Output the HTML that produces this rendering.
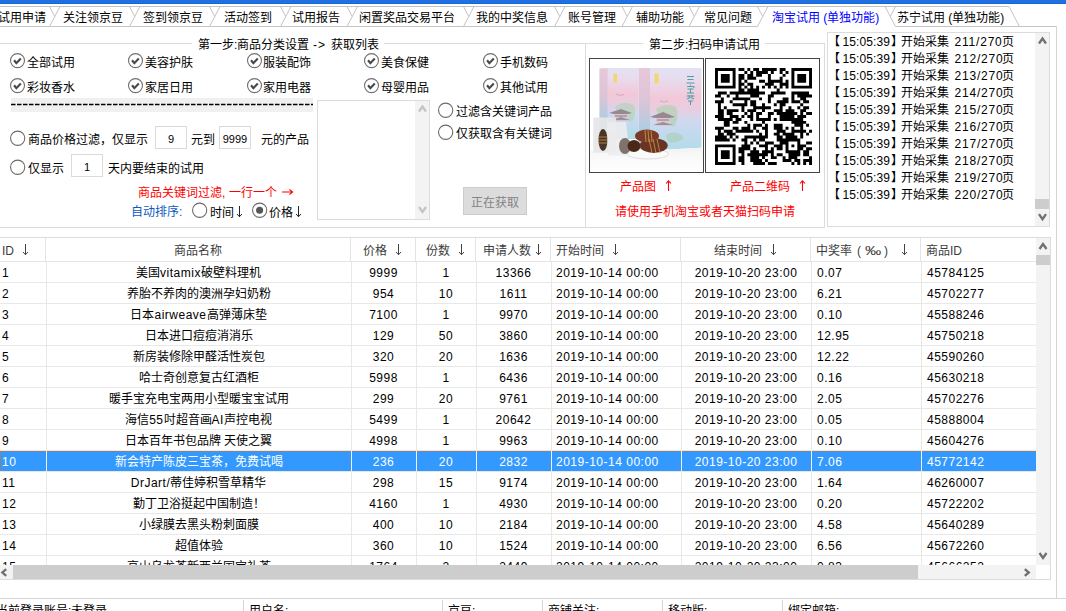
<!DOCTYPE html>
<html lang="zh-CN"><head><meta charset="utf-8"><title>ui</title><style>
html,body{margin:0;padding:0;width:1066px;height:611px;overflow:hidden;background:#fff;font-family:"Liberation Sans",sans-serif;font-size:12px;color:#000}
.a{position:absolute;white-space:nowrap;line-height:20px;height:20px}
.l{letter-spacing:0.5px}
.hl{position:absolute;height:1px;background:#dcdcdc}
.vl{position:absolute;width:1px;background:#dcdcdc}
svg{position:absolute;left:0;top:0;overflow:visible}
svg.i{position:static;display:inline-block;vertical-align:top}
</style></head><body>

<svg width="1066" height="32" style="position:absolute;left:0;top:0"><rect x="0" y="0" width="1066" height="3" fill="#2170e0"/><rect x="0" y="3" width="1066" height="1" fill="#1565dc"/><rect x="0" y="6" width="1009" height="1" fill="#c4c4c4"/><rect x="0" y="26" width="757.5" height="1" fill="#c4c4c4"/><rect x="895.5" y="26" width="161" height="1" fill="#c4c4c4"/><line x1="49.5" y1="6.5" x2="54.75" y2="16.5" stroke="#c4c4c4" stroke-width="1"/><line x1="60.0" y1="6.5" x2="49.5" y2="26.5" stroke="#c4c4c4" stroke-width="1"/><line x1="129.5" y1="6.5" x2="134.75" y2="16.5" stroke="#c4c4c4" stroke-width="1"/><line x1="140.0" y1="6.5" x2="129.5" y2="26.5" stroke="#c4c4c4" stroke-width="1"/><line x1="209.5" y1="6.5" x2="214.75" y2="16.5" stroke="#c4c4c4" stroke-width="1"/><line x1="220.0" y1="6.5" x2="209.5" y2="26.5" stroke="#c4c4c4" stroke-width="1"/><line x1="280.5" y1="6.5" x2="285.75" y2="16.5" stroke="#c4c4c4" stroke-width="1"/><line x1="291.0" y1="6.5" x2="280.5" y2="26.5" stroke="#c4c4c4" stroke-width="1"/><line x1="347" y1="6.5" x2="352.25" y2="16.5" stroke="#c4c4c4" stroke-width="1"/><line x1="357.5" y1="6.5" x2="347" y2="26.5" stroke="#c4c4c4" stroke-width="1"/><line x1="463.5" y1="6.5" x2="468.75" y2="16.5" stroke="#c4c4c4" stroke-width="1"/><line x1="474.0" y1="6.5" x2="463.5" y2="26.5" stroke="#c4c4c4" stroke-width="1"/><line x1="554.5" y1="6.5" x2="559.75" y2="16.5" stroke="#c4c4c4" stroke-width="1"/><line x1="565.0" y1="6.5" x2="554.5" y2="26.5" stroke="#c4c4c4" stroke-width="1"/><line x1="622" y1="6.5" x2="627.25" y2="16.5" stroke="#c4c4c4" stroke-width="1"/><line x1="632.5" y1="6.5" x2="622" y2="26.5" stroke="#c4c4c4" stroke-width="1"/><line x1="689" y1="6.5" x2="694.25" y2="16.5" stroke="#c4c4c4" stroke-width="1"/><line x1="699.5" y1="6.5" x2="689" y2="26.5" stroke="#c4c4c4" stroke-width="1"/><line x1="757.5" y1="6.5" x2="762.75" y2="16.5" stroke="#c4c4c4" stroke-width="1"/><line x1="768.0" y1="6.5" x2="757.5" y2="26.5" stroke="#c4c4c4" stroke-width="1"/><line x1="885" y1="6.5" x2="895.5" y2="26.5" stroke="#c4c4c4" stroke-width="1"/><line x1="895.5" y1="6.5" x2="890.25" y2="16.5" stroke="#c4c4c4" stroke-width="1"/><line x1="1009" y1="6.5" x2="1019.5" y2="26.5" stroke="#c4c4c4" stroke-width="1"/><rect x="1056" y="26" width="1" height="572" fill="#d4d4d4"/></svg>
<div class="a" style="left:-2px;top:8px;color:#000">试用申请</div>
<div class="a" style="left:63px;top:8px;color:#000">关注领京豆</div>
<div class="a" style="left:143px;top:8px;color:#000">签到领京豆</div>
<div class="a" style="left:224px;top:8px;color:#000">活动签到</div>
<div class="a" style="left:292px;top:8px;color:#000">试用报告</div>
<div class="a" style="left:359px;top:8px;color:#000">闲置奖品交易平台</div>
<div class="a" style="left:476px;top:8px;color:#000">我的中奖信息</div>
<div class="a" style="left:568px;top:8px;color:#000">账号管理</div>
<div class="a" style="left:636px;top:8px;color:#000">辅助功能</div>
<div class="a" style="left:704px;top:8px;color:#000">常见问题</div>
<div class="a" style="left:772px;top:8px;color:#0000ff">淘宝试用 (单独功能)</div>
<div class="a" style="left:897px;top:8px;color:#000">苏宁试用 (单独功能)</div>
<div class="hl" style="left:0;top:43px;width:192px"></div>
<div class="hl" style="left:384px;top:43px;width:259px"></div>
<div class="hl" style="left:765px;top:43px;width:60px"></div>
<div class="vl" style="left:585px;top:43px;height:185px"></div>
<div class="vl" style="left:824px;top:43px;height:185px"></div>
<div class="hl" style="left:0;top:227px;width:825px"></div>
<div class="a" style="left:198px;top:35px">第一步:商品分类设置</div>
<div class="a" style="left:313px;top:35px;letter-spacing:1px">-&gt;</div>
<div class="a" style="left:331px;top:35px">获取列表</div>
<div class="a" style="left:649px;top:35px">第二步:扫码申请试用</div>
<svg style="left:9.3px;top:52.5px" width="16" height="16"><circle cx="8.5" cy="7.6" r="7.0" fill="#fff" stroke="#707070" stroke-width="1.1"/><path d="M5.05 7.25 L7.35 10.2 L11.8 5.45" fill="none" stroke="#484848" stroke-width="2.1"/></svg>
<div class="a" style="left:26.8px;top:53px">全部试用</div>
<svg style="left:127.19999999999999px;top:52.5px" width="16" height="16"><circle cx="8.5" cy="7.6" r="7.0" fill="#fff" stroke="#707070" stroke-width="1.1"/><path d="M5.05 7.25 L7.35 10.2 L11.8 5.45" fill="none" stroke="#484848" stroke-width="2.1"/></svg>
<div class="a" style="left:144.7px;top:53px">美容护肤</div>
<svg style="left:245.5px;top:52.5px" width="16" height="16"><circle cx="8.5" cy="7.6" r="7.0" fill="#fff" stroke="#707070" stroke-width="1.1"/><path d="M5.05 7.25 L7.35 10.2 L11.8 5.45" fill="none" stroke="#484848" stroke-width="2.1"/></svg>
<div class="a" style="left:263.0px;top:53px">服装配饰</div>
<svg style="left:363px;top:52.5px" width="16" height="16"><circle cx="8.5" cy="7.6" r="7.0" fill="#fff" stroke="#707070" stroke-width="1.1"/><path d="M5.05 7.25 L7.35 10.2 L11.8 5.45" fill="none" stroke="#484848" stroke-width="2.1"/></svg>
<div class="a" style="left:380.5px;top:53px">美食保健</div>
<svg style="left:482px;top:52.5px" width="16" height="16"><circle cx="8.5" cy="7.6" r="7.0" fill="#fff" stroke="#707070" stroke-width="1.1"/><path d="M5.05 7.25 L7.35 10.2 L11.8 5.45" fill="none" stroke="#484848" stroke-width="2.1"/></svg>
<div class="a" style="left:499.5px;top:53px">手机数码</div>
<svg style="left:9.3px;top:77.5px" width="16" height="16"><circle cx="8.5" cy="7.6" r="7.0" fill="#fff" stroke="#707070" stroke-width="1.1"/><path d="M5.05 7.25 L7.35 10.2 L11.8 5.45" fill="none" stroke="#484848" stroke-width="2.1"/></svg>
<div class="a" style="left:26.8px;top:78px">彩妆香水</div>
<svg style="left:127.19999999999999px;top:77.5px" width="16" height="16"><circle cx="8.5" cy="7.6" r="7.0" fill="#fff" stroke="#707070" stroke-width="1.1"/><path d="M5.05 7.25 L7.35 10.2 L11.8 5.45" fill="none" stroke="#484848" stroke-width="2.1"/></svg>
<div class="a" style="left:144.7px;top:78px">家居日用</div>
<svg style="left:245.5px;top:77.5px" width="16" height="16"><circle cx="8.5" cy="7.6" r="7.0" fill="#fff" stroke="#707070" stroke-width="1.1"/><path d="M5.05 7.25 L7.35 10.2 L11.8 5.45" fill="none" stroke="#484848" stroke-width="2.1"/></svg>
<div class="a" style="left:263.0px;top:78px">家用电器</div>
<svg style="left:363px;top:77.5px" width="16" height="16"><circle cx="8.5" cy="7.6" r="7.0" fill="#fff" stroke="#707070" stroke-width="1.1"/><path d="M5.05 7.25 L7.35 10.2 L11.8 5.45" fill="none" stroke="#484848" stroke-width="2.1"/></svg>
<div class="a" style="left:380.5px;top:78px">母婴用品</div>
<svg style="left:482px;top:77.5px" width="16" height="16"><circle cx="8.5" cy="7.6" r="7.0" fill="#fff" stroke="#707070" stroke-width="1.1"/><path d="M5.05 7.25 L7.35 10.2 L11.8 5.45" fill="none" stroke="#484848" stroke-width="2.1"/></svg>
<div class="a" style="left:499.5px;top:78px">其他试用</div>
<div style="position:absolute;left:11px;top:98px;width:302px;height:14px;background:#f0f0f0"></div>
<svg style="left:11px;top:103px" width="302" height="3"><line x1="0" y1="1.5" x2="302" y2="1.5" stroke="#000" stroke-width="1.4" stroke-dasharray="4.5 1.5"/></svg>
<svg style="left:10.399999999999999px;top:129.5px" width="16" height="16"><circle cx="7.65" cy="8.25" r="7.1" fill="#fff" stroke="#6a6a6a" stroke-width="1.1"/></svg>
<div class="a" style="left:28px;top:130px">商品价格过滤，仅显示</div>
<div style="position:absolute;left:155px;top:126px;width:30px;height:21px;border:1px solid #dadada;background:#fff"></div>
<div class="a" style="left:155px;top:128.5px;width:32px;text-align:center;font-size:11px">9</div>
<div class="a" style="left:191px;top:130px">元到</div>
<div style="position:absolute;left:219px;top:126px;width:30px;height:21px;border:1px solid #dadada;background:#fff"></div>
<div class="a" style="left:219px;top:128.5px;width:32px;text-align:center;font-size:11px">9999</div>
<div class="a" style="left:261px;top:130px">元的产品</div>
<svg style="left:10.399999999999999px;top:158.5px" width="16" height="16"><circle cx="7.65" cy="8.25" r="7.1" fill="#fff" stroke="#6a6a6a" stroke-width="1.1"/></svg>
<div class="a" style="left:28px;top:159px">仅显示</div>
<div style="position:absolute;left:71px;top:154px;width:30px;height:21px;border:1px solid #dadada;background:#fff"></div>
<div class="a" style="left:71px;top:156.5px;width:32px;text-align:center;font-size:11px">1</div>
<div class="a" style="left:108px;top:159px">天内要结束的试用</div>
<div class="a" style="left:138px;top:183px;color:#ff0000">商品关键词过滤, 一行一个<span style="display:inline-block;width:5px"></span><svg class="i" width="11" height="6" style="margin-top:6px"><path d="M0 3H10.5M7.5 0.5L10.5 3L7.5 5.5" stroke="#f00" fill="none" stroke-width="1.1"/></svg></div>
<div class="a" style="left:131px;top:202px;color:#0a5ac0">自动排序:</div>
<svg style="left:192.3px;top:202.3px" width="16" height="16"><circle cx="7.65" cy="8.25" r="7.1" fill="#fff" stroke="#6a6a6a" stroke-width="1.1"/></svg>
<div class="a" style="left:210px;top:203px">时间<span style="display:inline-block;width:3px"></span><svg class="i" width="6" height="12" style="margin-top:3px"><path d="M2.5 0V11M0 8L2.5 10.7L5 8" stroke="#222" fill="none" stroke-width="1"/></svg></div>
<svg style="left:251.60000000000002px;top:202.3px" width="16" height="16"><circle cx="7.65" cy="8.25" r="7.1" fill="#fff" stroke="#6a6a6a" stroke-width="1.1"/><circle cx="7.6" cy="8.3" r="3.5" fill="#555"/></svg>
<div class="a" style="left:269px;top:203px">价格<span style="display:inline-block;width:3px"></span><svg class="i" width="6" height="12" style="margin-top:3px"><path d="M2.5 0V11M0 8L2.5 10.7L5 8" stroke="#222" fill="none" stroke-width="1"/></svg></div>
<div style="position:absolute;left:317px;top:100px;width:111px;height:118px;border:1px solid #dcdcdc;background:#fff"></div>
<div style="position:absolute;left:415px;top:101px;width:14px;height:118px;background:#f3f3f3"></div>
<svg width="1066" height="611"><path d="M419.0 111.5 L422.5 106.5 L426.0 111.5" fill="none" stroke="#c4c4c4" stroke-width="2.3"/><path d="M419.0 207.0 L422.5 212.0 L426.0 207.0" fill="none" stroke="#c4c4c4" stroke-width="2.3"/></svg>
<svg style="left:438px;top:102px" width="16" height="16"><circle cx="7.65" cy="8.25" r="7.1" fill="#fff" stroke="#6a6a6a" stroke-width="1.1"/></svg>
<div class="a" style="left:456px;top:102px">过滤含关键词产品</div>
<svg style="left:438px;top:123.6px" width="16" height="16"><circle cx="7.65" cy="8.25" r="7.1" fill="#fff" stroke="#6a6a6a" stroke-width="1.1"/></svg>
<div class="a" style="left:456px;top:124px">仅获取含有关键词</div>
<div style="position:absolute;left:463px;top:187px;width:62px;height:26px;border:1px solid #cccccc;background:#dcdcdc"></div>
<div class="a" style="left:471px;top:192.5px;color:#838383">正在获取</div>
<div style="position:absolute;left:589px;top:58px;width:113px;height:113px;border:1px solid #444;background:#fff"></div>
<div style="position:absolute;left:705px;top:58px;width:113px;height:113px;border:1px solid #444;background:#fff"></div>
<svg style="left:590px;top:59px" width="113" height="113">
<defs>
<linearGradient id="g1" x1="0" y1="0" x2="0" y2="1"><stop offset="0" stop-color="#e2e2f4"/><stop offset="0.14" stop-color="#e8dcee"/><stop offset="0.36" stop-color="#f2c8d8"/><stop offset="0.5" stop-color="#e8cde0"/><stop offset="0.64" stop-color="#d0d8f0"/><stop offset="1" stop-color="#b0dcea"/></linearGradient>
<linearGradient id="g2" x1="0" y1="0" x2="0" y2="1"><stop offset="0" stop-color="#e6c8d8"/><stop offset="0.4" stop-color="#dcc4d8"/><stop offset="0.7" stop-color="#b4cce0"/><stop offset="1" stop-color="#94ccd8"/></linearGradient>
<linearGradient id="gw" x1="0" y1="0" x2="0" y2="1"><stop offset="0" stop-color="#f6f6f6"/><stop offset="1" stop-color="#ffffff"/></linearGradient>
</defs>
<rect x="0" y="0" width="113" height="113" fill="#fff"/>
<polygon points="9.4,9.4 17.9,9 17.9,80 9.4,80" fill="url(#g2)"/>
<polygon points="17.9,9 48.6,9 48.6,80 17.9,80" fill="url(#g1)"/>
<polygon points="48.6,9 60,9 60,91.6 48.6,92" fill="url(#g2)"/>
<polygon points="60,9 111.5,9 111.5,88.8 60,91.6" fill="url(#g1)"/>
<rect x="0" y="91" width="113" height="22" fill="url(#gw)"/>
<polygon points="48.6,92 111.5,88.8 111.5,92 48.6,95" fill="#f4f4f4"/>
<rect x="23.5" y="14.5" width="3.5" height="9" fill="#f2d868"/>
<rect x="64.5" y="14.5" width="4" height="10" fill="#f2d868"/>
<g stroke="#4aa0a8" stroke-width="1" fill="none">
<path d="M97 17.5h7M97.5 20.5h6M96.5 24h8"/>
<path d="M100.5 25.5v1M97 27.5h7v1.5M97.5 30h6M100.5 30v4M97 34h7"/>
<path d="M96.5 37h8M99 36v2.5M102 36v2.5M97 40l3.5-1.5 3.5 1.5M98 42h5M100.5 42v4"/>
</g>
<g opacity="0.6">
<path d="M25 48 Q33 41 44 46 Q47 55 42 63 L30 60 Z" fill="#b0d4b0"/>
<path d="M19 54 L31 50 L42 54 L38 55 L24 55 Z" fill="#6a5858"/>
<rect x="24" y="55" width="14" height="7" fill="#d8c0c0"/>
<rect x="25" y="56" width="12" height="2" fill="#c07070"/>
<path d="M22 61 L31 58 L40 61 Z" fill="#7a6060"/>
<path d="M66 50 Q76 43 86 48 Q90 58 84 68 L72 64 Z" fill="#acd2ac"/>
<path d="M60 58 L73 53 L85 58 L80 59 L65 59 Z" fill="#6a5858"/>
<rect x="66" y="59" width="14" height="8" fill="#d8c4c8"/>
<rect x="67" y="60" width="12" height="2" fill="#c07070"/>
<path d="M63 66 L73 63 L83 66 Z" fill="#7a6060"/>
<path d="M76 76 Q86 70 94 79 Q86 85 78 83 Z" fill="#a8d0b0"/>
<path d="M26 35 l4 1.5 l4 -1 M70 42 l4 1 l4 -1" stroke="#908090" stroke-width="0.6" fill="none"/>
</g>
<polygon points="3.3,58.5 26,58.5 26,93.6 3.3,93.6" fill="#e6e6e8" opacity="0.92"/>
<ellipse cx="13" cy="81" rx="4.5" ry="11" fill="#4a3428"/>
<path d="M8.5 78 H17.5 M8.5 81 H17.5 M8.5 84 H17.5" stroke="#c09848" stroke-width="0.8"/>
<polygon points="16.8,62.9 36,62.9 40,96.3 18,96.3" fill="#ecebee" opacity="0.9"/>
<ellipse cx="35" cy="87" rx="6" ry="8" fill="#5a4a40" opacity="0.75"/>
<ellipse cx="58" cy="95" rx="20.5" ry="5" fill="#fafafa" stroke="#d8d8d8" stroke-width="0.8"/>
<ellipse cx="44" cy="87" rx="6.5" ry="6" fill="#4a2818"/>
<ellipse cx="63.7" cy="86.6" rx="14" ry="7.4" fill="#6a3424"/>
<ellipse cx="57" cy="77" rx="12" ry="6.5" fill="#7a3a28"/>
<path d="M55 71 L56 83 M58 71 L59 83 M61 71 L62 83 M59 80 L62 94 M63 80 L66 94 M67 80 L70 94" stroke="#c8a048" stroke-width="0.8"/>
</svg>
<svg style="left:714.5px;top:68px" width="98" height="98"><path d="M0.00 0.00h20.58v2.94h-20.58zM23.52 0.00h5.88v2.94h-5.88zM32.33 0.00h2.94v2.94h-2.94zM38.21 0.00h5.88v2.94h-5.88zM47.03 0.00h14.70v2.94h-14.70zM64.67 0.00h5.88v2.94h-5.88zM76.42 0.00h20.58v2.94h-20.58zM0.00 2.94h2.94v2.94h-2.94zM17.64 2.94h2.94v2.94h-2.94zM29.39 2.94h2.94v2.94h-2.94zM35.27 2.94h2.94v2.94h-2.94zM41.15 2.94h11.76v2.94h-11.76zM55.85 2.94h2.94v2.94h-2.94zM64.67 2.94h2.94v2.94h-2.94zM70.55 2.94h2.94v2.94h-2.94zM76.42 2.94h2.94v2.94h-2.94zM94.06 2.94h2.94v2.94h-2.94zM0.00 5.88h2.94v2.94h-2.94zM5.88 5.88h8.82v2.94h-8.82zM17.64 5.88h2.94v2.94h-2.94zM23.52 5.88h5.88v2.94h-5.88zM32.33 5.88h5.88v2.94h-5.88zM41.15 5.88h5.88v2.94h-5.88zM52.91 5.88h2.94v2.94h-2.94zM67.61 5.88h2.94v2.94h-2.94zM76.42 5.88h2.94v2.94h-2.94zM82.30 5.88h8.82v2.94h-8.82zM94.06 5.88h2.94v2.94h-2.94zM0.00 8.82h2.94v2.94h-2.94zM5.88 8.82h8.82v2.94h-8.82zM17.64 8.82h2.94v2.94h-2.94zM23.52 8.82h5.88v2.94h-5.88zM32.33 8.82h8.82v2.94h-8.82zM52.91 8.82h2.94v2.94h-2.94zM64.67 8.82h2.94v2.94h-2.94zM76.42 8.82h2.94v2.94h-2.94zM82.30 8.82h8.82v2.94h-8.82zM94.06 8.82h2.94v2.94h-2.94zM0.00 11.76h2.94v2.94h-2.94zM5.88 11.76h8.82v2.94h-8.82zM17.64 11.76h2.94v2.94h-2.94zM23.52 11.76h2.94v2.94h-2.94zM29.39 11.76h2.94v2.94h-2.94zM44.09 11.76h5.88v2.94h-5.88zM52.91 11.76h14.70v2.94h-14.70zM70.55 11.76h2.94v2.94h-2.94zM76.42 11.76h2.94v2.94h-2.94zM82.30 11.76h8.82v2.94h-8.82zM94.06 11.76h2.94v2.94h-2.94zM0.00 14.70h2.94v2.94h-2.94zM17.64 14.70h2.94v2.94h-2.94zM23.52 14.70h5.88v2.94h-5.88zM32.33 14.70h5.88v2.94h-5.88zM49.97 14.70h8.82v2.94h-8.82zM64.67 14.70h8.82v2.94h-8.82zM76.42 14.70h2.94v2.94h-2.94zM94.06 14.70h2.94v2.94h-2.94zM0.00 17.64h20.58v2.94h-20.58zM23.52 17.64h2.94v2.94h-2.94zM29.39 17.64h2.94v2.94h-2.94zM35.27 17.64h2.94v2.94h-2.94zM41.15 17.64h2.94v2.94h-2.94zM47.03 17.64h2.94v2.94h-2.94zM52.91 17.64h2.94v2.94h-2.94zM58.79 17.64h2.94v2.94h-2.94zM64.67 17.64h2.94v2.94h-2.94zM70.55 17.64h2.94v2.94h-2.94zM76.42 17.64h20.58v2.94h-20.58zM23.52 20.58h5.88v2.94h-5.88zM32.33 20.58h11.76v2.94h-11.76zM61.73 20.58h2.94v2.94h-2.94zM2.94 23.52h8.82v2.94h-8.82zM14.70 23.52h35.27v2.94h-35.27zM55.85 23.52h14.70v2.94h-14.70zM76.42 23.52h17.64v2.94h-17.64zM0.00 26.45h5.88v2.94h-5.88zM11.76 26.45h2.94v2.94h-2.94zM20.58 26.45h2.94v2.94h-2.94zM35.27 26.45h8.82v2.94h-8.82zM52.91 26.45h5.88v2.94h-5.88zM76.42 26.45h2.94v2.94h-2.94zM82.30 26.45h14.70v2.94h-14.70zM5.88 29.39h2.94v2.94h-2.94zM17.64 29.39h17.64v2.94h-17.64zM44.09 29.39h2.94v2.94h-2.94zM52.91 29.39h2.94v2.94h-2.94zM67.61 29.39h5.88v2.94h-5.88zM76.42 29.39h2.94v2.94h-2.94zM85.24 29.39h5.88v2.94h-5.88zM0.00 32.33h8.82v2.94h-8.82zM14.70 32.33h2.94v2.94h-2.94zM29.39 32.33h2.94v2.94h-2.94zM35.27 32.33h5.88v2.94h-5.88zM52.91 32.33h2.94v2.94h-2.94zM61.73 32.33h11.76v2.94h-11.76zM76.42 32.33h8.82v2.94h-8.82zM88.18 32.33h5.88v2.94h-5.88zM2.94 35.27h2.94v2.94h-2.94zM17.64 35.27h14.70v2.94h-14.70zM35.27 35.27h5.88v2.94h-5.88zM47.03 35.27h2.94v2.94h-2.94zM58.79 35.27h2.94v2.94h-2.94zM64.67 35.27h5.88v2.94h-5.88zM85.24 35.27h2.94v2.94h-2.94zM2.94 38.21h2.94v2.94h-2.94zM8.82 38.21h2.94v2.94h-2.94zM26.45 38.21h2.94v2.94h-2.94zM38.21 38.21h17.64v2.94h-17.64zM64.67 38.21h2.94v2.94h-2.94zM73.48 38.21h2.94v2.94h-2.94zM82.30 38.21h2.94v2.94h-2.94zM88.18 38.21h5.88v2.94h-5.88zM2.94 41.15h5.88v2.94h-5.88zM11.76 41.15h11.76v2.94h-11.76zM26.45 41.15h2.94v2.94h-2.94zM32.33 41.15h8.82v2.94h-8.82zM47.03 41.15h2.94v2.94h-2.94zM58.79 41.15h8.82v2.94h-8.82zM70.55 41.15h8.82v2.94h-8.82zM85.24 41.15h5.88v2.94h-5.88zM2.94 44.09h5.88v2.94h-5.88zM11.76 44.09h5.88v2.94h-5.88zM29.39 44.09h2.94v2.94h-2.94zM35.27 44.09h2.94v2.94h-2.94zM41.15 44.09h5.88v2.94h-5.88zM52.91 44.09h5.88v2.94h-5.88zM61.73 44.09h20.58v2.94h-20.58zM85.24 44.09h2.94v2.94h-2.94zM91.12 44.09h5.88v2.94h-5.88zM0.00 47.03h8.82v2.94h-8.82zM14.70 47.03h8.82v2.94h-8.82zM26.45 47.03h2.94v2.94h-2.94zM32.33 47.03h5.88v2.94h-5.88zM41.15 47.03h2.94v2.94h-2.94zM52.91 47.03h2.94v2.94h-2.94zM64.67 47.03h14.70v2.94h-14.70zM82.30 47.03h8.82v2.94h-8.82zM2.94 49.97h14.70v2.94h-14.70zM20.58 49.97h5.88v2.94h-5.88zM35.27 49.97h2.94v2.94h-2.94zM41.15 49.97h14.70v2.94h-14.70zM58.79 49.97h2.94v2.94h-2.94zM64.67 49.97h23.52v2.94h-23.52zM8.82 52.91h5.88v2.94h-5.88zM17.64 52.91h5.88v2.94h-5.88zM29.39 52.91h2.94v2.94h-2.94zM47.03 52.91h2.94v2.94h-2.94zM76.42 52.91h14.70v2.94h-14.70zM8.82 55.85h5.88v2.94h-5.88zM32.33 55.85h2.94v2.94h-2.94zM38.21 55.85h8.82v2.94h-8.82zM49.97 55.85h2.94v2.94h-2.94zM58.79 55.85h8.82v2.94h-8.82zM79.36 55.85h8.82v2.94h-8.82zM91.12 55.85h2.94v2.94h-2.94zM0.00 58.79h8.82v2.94h-8.82zM17.64 58.79h5.88v2.94h-5.88zM26.45 58.79h8.82v2.94h-8.82zM38.21 58.79h2.94v2.94h-2.94zM47.03 58.79h5.88v2.94h-5.88zM58.79 58.79h8.82v2.94h-8.82zM70.55 58.79h2.94v2.94h-2.94zM76.42 58.79h2.94v2.94h-2.94zM85.24 58.79h2.94v2.94h-2.94zM2.94 61.73h2.94v2.94h-2.94zM8.82 61.73h8.82v2.94h-8.82zM20.58 61.73h17.64v2.94h-17.64zM41.15 61.73h2.94v2.94h-2.94zM49.97 61.73h2.94v2.94h-2.94zM61.73 61.73h8.82v2.94h-8.82zM76.42 61.73h14.70v2.94h-14.70zM94.06 61.73h2.94v2.94h-2.94zM2.94 64.67h5.88v2.94h-5.88zM11.76 64.67h8.82v2.94h-8.82zM44.09 64.67h2.94v2.94h-2.94zM49.97 64.67h2.94v2.94h-2.94zM58.79 64.67h5.88v2.94h-5.88zM67.61 64.67h11.76v2.94h-11.76zM85.24 64.67h2.94v2.94h-2.94zM91.12 64.67h2.94v2.94h-2.94zM0.00 67.61h11.76v2.94h-11.76zM14.70 67.61h2.94v2.94h-2.94zM20.58 67.61h2.94v2.94h-2.94zM29.39 67.61h23.52v2.94h-23.52zM61.73 67.61h5.88v2.94h-5.88zM70.55 67.61h11.76v2.94h-11.76zM85.24 67.61h2.94v2.94h-2.94zM0.00 70.55h14.70v2.94h-14.70zM17.64 70.55h2.94v2.94h-2.94zM26.45 70.55h5.88v2.94h-5.88zM38.21 70.55h2.94v2.94h-2.94zM44.09 70.55h5.88v2.94h-5.88zM61.73 70.55h23.52v2.94h-23.52zM29.39 73.48h2.94v2.94h-2.94zM35.27 73.48h2.94v2.94h-2.94zM41.15 73.48h2.94v2.94h-2.94zM49.97 73.48h8.82v2.94h-8.82zM64.67 73.48h8.82v2.94h-8.82zM82.30 73.48h2.94v2.94h-2.94zM91.12 73.48h5.88v2.94h-5.88zM0.00 76.42h20.58v2.94h-20.58zM26.45 76.42h8.82v2.94h-8.82zM44.09 76.42h8.82v2.94h-8.82zM58.79 76.42h8.82v2.94h-8.82zM70.55 76.42h2.94v2.94h-2.94zM76.42 76.42h2.94v2.94h-2.94zM82.30 76.42h8.82v2.94h-8.82zM0.00 79.36h2.94v2.94h-2.94zM17.64 79.36h2.94v2.94h-2.94zM23.52 79.36h11.76v2.94h-11.76zM38.21 79.36h2.94v2.94h-2.94zM49.97 79.36h2.94v2.94h-2.94zM55.85 79.36h2.94v2.94h-2.94zM61.73 79.36h5.88v2.94h-5.88zM70.55 79.36h2.94v2.94h-2.94zM82.30 79.36h5.88v2.94h-5.88zM91.12 79.36h5.88v2.94h-5.88zM0.00 82.30h2.94v2.94h-2.94zM5.88 82.30h8.82v2.94h-8.82zM17.64 82.30h2.94v2.94h-2.94zM23.52 82.30h5.88v2.94h-5.88zM35.27 82.30h8.82v2.94h-8.82zM47.03 82.30h11.76v2.94h-11.76zM70.55 82.30h14.70v2.94h-14.70zM88.18 82.30h5.88v2.94h-5.88zM0.00 85.24h2.94v2.94h-2.94zM5.88 85.24h8.82v2.94h-8.82zM17.64 85.24h2.94v2.94h-2.94zM26.45 85.24h2.94v2.94h-2.94zM32.33 85.24h20.58v2.94h-20.58zM55.85 85.24h2.94v2.94h-2.94zM61.73 85.24h5.88v2.94h-5.88zM73.48 85.24h11.76v2.94h-11.76zM88.18 85.24h5.88v2.94h-5.88zM0.00 88.18h2.94v2.94h-2.94zM5.88 88.18h8.82v2.94h-8.82zM17.64 88.18h2.94v2.94h-2.94zM23.52 88.18h5.88v2.94h-5.88zM35.27 88.18h8.82v2.94h-8.82zM47.03 88.18h2.94v2.94h-2.94zM55.85 88.18h5.88v2.94h-5.88zM67.61 88.18h2.94v2.94h-2.94zM73.48 88.18h8.82v2.94h-8.82zM94.06 88.18h2.94v2.94h-2.94zM0.00 91.12h2.94v2.94h-2.94zM17.64 91.12h2.94v2.94h-2.94zM23.52 91.12h5.88v2.94h-5.88zM35.27 91.12h11.76v2.94h-11.76zM49.97 91.12h2.94v2.94h-2.94zM67.61 91.12h8.82v2.94h-8.82zM79.36 91.12h5.88v2.94h-5.88zM88.18 91.12h8.82v2.94h-8.82zM0.00 94.06h20.58v2.94h-20.58zM26.45 94.06h2.94v2.94h-2.94zM38.21 94.06h11.76v2.94h-11.76zM52.91 94.06h8.82v2.94h-8.82zM76.42 94.06h2.94v2.94h-2.94zM82.30 94.06h2.94v2.94h-2.94zM88.18 94.06h2.94v2.94h-2.94zM94.06 94.06h2.94v2.94h-2.94z" fill="#000"/></svg>
<div class="a" style="left:620px;top:177px;color:#ff0000">产品图<span style="display:inline-block;width:10px"></span><svg class="i" width="6" height="12" style="margin-top:3px"><path d="M2.5 0.5V11M0 3.5L2.5 0.8L5 3.5" stroke="#f00" fill="none" stroke-width="1.1"/></svg></div>
<div class="a" style="left:730px;top:177px;color:#ff0000">产品二维码<span style="display:inline-block;width:10px"></span><svg class="i" width="6" height="12" style="margin-top:3px"><path d="M2.5 0.5V11M0 3.5L2.5 0.8L5 3.5" stroke="#f00" fill="none" stroke-width="1.1"/></svg></div>
<div class="a" style="left:615px;top:202px;color:#ff0000">请使用手机淘宝或者天猫扫码申请</div>
<div style="position:absolute;left:827px;top:32px;width:221px;height:193px;border:1px solid #dcdcdc;background:#fff"></div>
<div style="position:absolute;left:1035px;top:33px;width:14px;height:193px;background:#f3f3f3"></div>
<div style="position:absolute;left:1035px;top:199px;width:14px;height:10px;background:#cdcdcd"></div>
<svg width="1066" height="611"><path d="M1039.0 43.5 L1042.5 38.5 L1046.0 43.5" fill="none" stroke="#707070" stroke-width="2.3"/><path d="M1039.0 214.2 L1042.5 219.2 L1046.0 214.2" fill="none" stroke="#707070" stroke-width="2.3"/></svg>
<div class="a" style="left:828px;top:32px">【</div>
<div class="a" style="left:842.5px;top:32px;letter-spacing:0.1px">15:05:39</div>
<div class="a" style="left:890.5px;top:32px">】</div>
<div class="a" style="left:901px;top:32px">开始采集</div>
<div class="a" style="left:954.5px;top:32px;letter-spacing:0.8px">211/270</div>
<div class="a" style="left:1002px;top:32px">页</div>
<div class="a" style="left:828px;top:49px">【</div>
<div class="a" style="left:842.5px;top:49px;letter-spacing:0.1px">15:05:39</div>
<div class="a" style="left:890.5px;top:49px">】</div>
<div class="a" style="left:901px;top:49px">开始采集</div>
<div class="a" style="left:954.5px;top:49px;letter-spacing:0.8px">212/270</div>
<div class="a" style="left:1002px;top:49px">页</div>
<div class="a" style="left:828px;top:66px">【</div>
<div class="a" style="left:842.5px;top:66px;letter-spacing:0.1px">15:05:39</div>
<div class="a" style="left:890.5px;top:66px">】</div>
<div class="a" style="left:901px;top:66px">开始采集</div>
<div class="a" style="left:954.5px;top:66px;letter-spacing:0.8px">213/270</div>
<div class="a" style="left:1002px;top:66px">页</div>
<div class="a" style="left:828px;top:83px">【</div>
<div class="a" style="left:842.5px;top:83px;letter-spacing:0.1px">15:05:39</div>
<div class="a" style="left:890.5px;top:83px">】</div>
<div class="a" style="left:901px;top:83px">开始采集</div>
<div class="a" style="left:954.5px;top:83px;letter-spacing:0.8px">214/270</div>
<div class="a" style="left:1002px;top:83px">页</div>
<div class="a" style="left:828px;top:100px">【</div>
<div class="a" style="left:842.5px;top:100px;letter-spacing:0.1px">15:05:39</div>
<div class="a" style="left:890.5px;top:100px">】</div>
<div class="a" style="left:901px;top:100px">开始采集</div>
<div class="a" style="left:954.5px;top:100px;letter-spacing:0.8px">215/270</div>
<div class="a" style="left:1002px;top:100px">页</div>
<div class="a" style="left:828px;top:117px">【</div>
<div class="a" style="left:842.5px;top:117px;letter-spacing:0.1px">15:05:39</div>
<div class="a" style="left:890.5px;top:117px">】</div>
<div class="a" style="left:901px;top:117px">开始采集</div>
<div class="a" style="left:954.5px;top:117px;letter-spacing:0.8px">216/270</div>
<div class="a" style="left:1002px;top:117px">页</div>
<div class="a" style="left:828px;top:134px">【</div>
<div class="a" style="left:842.5px;top:134px;letter-spacing:0.1px">15:05:39</div>
<div class="a" style="left:890.5px;top:134px">】</div>
<div class="a" style="left:901px;top:134px">开始采集</div>
<div class="a" style="left:954.5px;top:134px;letter-spacing:0.8px">217/270</div>
<div class="a" style="left:1002px;top:134px">页</div>
<div class="a" style="left:828px;top:151px">【</div>
<div class="a" style="left:842.5px;top:151px;letter-spacing:0.1px">15:05:39</div>
<div class="a" style="left:890.5px;top:151px">】</div>
<div class="a" style="left:901px;top:151px">开始采集</div>
<div class="a" style="left:954.5px;top:151px;letter-spacing:0.8px">218/270</div>
<div class="a" style="left:1002px;top:151px">页</div>
<div class="a" style="left:828px;top:168px">【</div>
<div class="a" style="left:842.5px;top:168px;letter-spacing:0.1px">15:05:39</div>
<div class="a" style="left:890.5px;top:168px">】</div>
<div class="a" style="left:901px;top:168px">开始采集</div>
<div class="a" style="left:954.5px;top:168px;letter-spacing:0.8px">219/270</div>
<div class="a" style="left:1002px;top:168px">页</div>
<div class="a" style="left:828px;top:185px">【</div>
<div class="a" style="left:842.5px;top:185px;letter-spacing:0.1px">15:05:39</div>
<div class="a" style="left:890.5px;top:185px">】</div>
<div class="a" style="left:901px;top:185px">开始采集</div>
<div class="a" style="left:954.5px;top:185px;letter-spacing:0.8px">220/270</div>
<div class="a" style="left:1002px;top:185px">页</div>
<div style="position:absolute;left:0;top:237px;width:1050px;height:341px;border-top:1px solid #dcdcdc;border-right:1px solid #dcdcdc;border-bottom:1px solid #dcdcdc;background:#fff"></div>
<div class="hl" style="left:0;top:261px;width:1036px;background:#e4e4e4"></div>
<div class="vl" style="left:45px;top:238px;height:23px;background:#e4e4e4"></div>
<div class="vl" style="left:350px;top:238px;height:23px;background:#e4e4e4"></div>
<div class="vl" style="left:415px;top:238px;height:23px;background:#e4e4e4"></div>
<div class="vl" style="left:475px;top:238px;height:23px;background:#e4e4e4"></div>
<div class="vl" style="left:550px;top:238px;height:23px;background:#e4e4e4"></div>
<div class="vl" style="left:680px;top:238px;height:23px;background:#e4e4e4"></div>
<div class="vl" style="left:810px;top:238px;height:23px;background:#e4e4e4"></div>
<div class="vl" style="left:920px;top:238px;height:23px;background:#e4e4e4"></div>
<div class="vl" style="left:46px;top:262px;height:303px;background:#e8e8e8"></div>
<div class="vl" style="left:351px;top:262px;height:303px;background:#e8e8e8"></div>
<div class="vl" style="left:416px;top:262px;height:303px;background:#e8e8e8"></div>
<div class="vl" style="left:476px;top:262px;height:303px;background:#e8e8e8"></div>
<div class="vl" style="left:551px;top:262px;height:303px;background:#e8e8e8"></div>
<div class="vl" style="left:681px;top:262px;height:303px;background:#e8e8e8"></div>
<div class="vl" style="left:811px;top:262px;height:303px;background:#e8e8e8"></div>
<div class="vl" style="left:921px;top:262px;height:303px;background:#e8e8e8"></div>
<div class="a" style="left:2px;top:241px;color:#3c3c3c">ID<span style="display:inline-block;width:9px"></span><svg class="i" width="6" height="12" style="margin-top:3px"><path d="M2.5 0V11M0 8L2.5 10.7L5 8" stroke="#444" fill="none" stroke-width="1"/></svg></div>
<div class="a" style="left:45px;width:305px;text-align:center;top:241px;color:#3c3c3c">商品名称</div>
<div class="a" style="left:350px;width:65px;text-align:center;top:241px;color:#3c3c3c">价格<span style="display:inline-block;width:9px"></span><svg class="i" width="6" height="12" style="margin-top:3px"><path d="M2.5 0V11M0 8L2.5 10.7L5 8" stroke="#444" fill="none" stroke-width="1"/></svg></div>
<div class="a" style="left:415px;width:60px;text-align:center;top:241px;color:#3c3c3c">份数<span style="display:inline-block;width:9px"></span><svg class="i" width="6" height="12" style="margin-top:3px"><path d="M2.5 0V11M0 8L2.5 10.7L5 8" stroke="#444" fill="none" stroke-width="1"/></svg></div>
<div class="a" style="left:475px;width:75px;text-align:center;top:241px;color:#3c3c3c">申请人数<span style="display:inline-block;width:5px"></span><svg class="i" width="6" height="12" style="margin-top:3px"><path d="M2.5 0V11M0 8L2.5 10.7L5 8" stroke="#444" fill="none" stroke-width="1"/></svg></div>
<div class="a" style="left:556px;top:241px;color:#3c3c3c">开始时间<span style="display:inline-block;width:9px"></span><svg class="i" width="6" height="12" style="margin-top:3px"><path d="M2.5 0V11M0 8L2.5 10.7L5 8" stroke="#444" fill="none" stroke-width="1"/></svg></div>
<div class="a" style="left:680px;width:130px;text-align:center;top:241px;color:#3c3c3c">结束时间<span style="display:inline-block;width:9px"></span><svg class="i" width="6" height="12" style="margin-top:3px"><path d="M2.5 0V11M0 8L2.5 10.7L5 8" stroke="#444" fill="none" stroke-width="1"/></svg></div>
<div class="a" style="left:816px;top:241px;color:#3c3c3c">中奖率<span style="display:inline-block;width:5px"></span>(<span style="display:inline-block;width:4px"></span><span style="display:inline-block;transform:scaleX(1.35);transform-origin:left;margin-right:4px">‰</span><span style="display:inline-block;width:3px"></span>)<span style="display:inline-block;width:14px"></span><svg class="i" width="6" height="12" style="margin-top:3px"><path d="M2.5 0V11M0 8L2.5 10.7L5 8" stroke="#444" fill="none" stroke-width="1"/></svg></div>
<div class="a" style="left:926px;top:241px;color:#3c3c3c">商品ID</div>
<div style="position:absolute;left:0;top:262px;width:1036px;height:303px;overflow:hidden">
<div style="position:absolute;left:0;top:20px;width:1036px;height:1px;background:#e8e8e8"></div>
<div class="a l" style="left:2px;top:1px;color:#000">1</div>
<div class="a" style="left:46px;width:305px;text-align:center;top:1px;color:#000">美国<span class="l">vitamix</span>破壁料理机</div>
<div class="a l" style="left:351px;width:65px;text-align:center;top:1px;color:#000">9999</div>
<div class="a l" style="left:416px;width:60px;text-align:center;top:1px;color:#000">1</div>
<div class="a l" style="left:476px;width:75px;text-align:center;top:1px;color:#000">13366</div>
<div class="a l" style="left:556px;top:1px;color:#000">2019-10-14 00:00</div>
<div class="a l" style="left:681px;width:130px;text-align:center;top:1px;color:#000">2019-10-20 23:00</div>
<div class="a l" style="left:817px;top:1px;color:#000">0.07</div>
<div class="a l" style="left:927px;top:1px;color:#000">45784125</div>
<div style="position:absolute;left:0;top:41px;width:1036px;height:1px;background:#e8e8e8"></div>
<div class="a l" style="left:2px;top:22px;color:#000">2</div>
<div class="a" style="left:46px;width:305px;text-align:center;top:22px;color:#000">养胎不养肉的澳洲孕妇奶粉</div>
<div class="a l" style="left:351px;width:65px;text-align:center;top:22px;color:#000">954</div>
<div class="a l" style="left:416px;width:60px;text-align:center;top:22px;color:#000">10</div>
<div class="a l" style="left:476px;width:75px;text-align:center;top:22px;color:#000">1611</div>
<div class="a l" style="left:556px;top:22px;color:#000">2019-10-14 00:00</div>
<div class="a l" style="left:681px;width:130px;text-align:center;top:22px;color:#000">2019-10-20 23:00</div>
<div class="a l" style="left:817px;top:22px;color:#000">6.21</div>
<div class="a l" style="left:927px;top:22px;color:#000">45702277</div>
<div style="position:absolute;left:0;top:62px;width:1036px;height:1px;background:#e8e8e8"></div>
<div class="a l" style="left:2px;top:43px;color:#000">3</div>
<div class="a" style="left:46px;width:305px;text-align:center;top:43px;color:#000">日本<span class="l">airweave</span>高弹薄床垫</div>
<div class="a l" style="left:351px;width:65px;text-align:center;top:43px;color:#000">7100</div>
<div class="a l" style="left:416px;width:60px;text-align:center;top:43px;color:#000">1</div>
<div class="a l" style="left:476px;width:75px;text-align:center;top:43px;color:#000">9970</div>
<div class="a l" style="left:556px;top:43px;color:#000">2019-10-14 00:00</div>
<div class="a l" style="left:681px;width:130px;text-align:center;top:43px;color:#000">2019-10-20 23:00</div>
<div class="a l" style="left:817px;top:43px;color:#000">0.10</div>
<div class="a l" style="left:927px;top:43px;color:#000">45588246</div>
<div style="position:absolute;left:0;top:83px;width:1036px;height:1px;background:#e8e8e8"></div>
<div class="a l" style="left:2px;top:64px;color:#000">4</div>
<div class="a" style="left:46px;width:305px;text-align:center;top:64px;color:#000">日本进口痘痘消消乐</div>
<div class="a l" style="left:351px;width:65px;text-align:center;top:64px;color:#000">129</div>
<div class="a l" style="left:416px;width:60px;text-align:center;top:64px;color:#000">50</div>
<div class="a l" style="left:476px;width:75px;text-align:center;top:64px;color:#000">3860</div>
<div class="a l" style="left:556px;top:64px;color:#000">2019-10-14 00:00</div>
<div class="a l" style="left:681px;width:130px;text-align:center;top:64px;color:#000">2019-10-20 23:00</div>
<div class="a l" style="left:817px;top:64px;color:#000">12.95</div>
<div class="a l" style="left:927px;top:64px;color:#000">45750218</div>
<div style="position:absolute;left:0;top:104px;width:1036px;height:1px;background:#e8e8e8"></div>
<div class="a l" style="left:2px;top:85px;color:#000">5</div>
<div class="a" style="left:46px;width:305px;text-align:center;top:85px;color:#000">新房装修除甲醛活性炭包</div>
<div class="a l" style="left:351px;width:65px;text-align:center;top:85px;color:#000">320</div>
<div class="a l" style="left:416px;width:60px;text-align:center;top:85px;color:#000">20</div>
<div class="a l" style="left:476px;width:75px;text-align:center;top:85px;color:#000">1636</div>
<div class="a l" style="left:556px;top:85px;color:#000">2019-10-14 00:00</div>
<div class="a l" style="left:681px;width:130px;text-align:center;top:85px;color:#000">2019-10-20 23:00</div>
<div class="a l" style="left:817px;top:85px;color:#000">12.22</div>
<div class="a l" style="left:927px;top:85px;color:#000">45590260</div>
<div style="position:absolute;left:0;top:125px;width:1036px;height:1px;background:#e8e8e8"></div>
<div class="a l" style="left:2px;top:106px;color:#000">6</div>
<div class="a" style="left:46px;width:305px;text-align:center;top:106px;color:#000">哈士奇创意复古红酒柜</div>
<div class="a l" style="left:351px;width:65px;text-align:center;top:106px;color:#000">5998</div>
<div class="a l" style="left:416px;width:60px;text-align:center;top:106px;color:#000">1</div>
<div class="a l" style="left:476px;width:75px;text-align:center;top:106px;color:#000">6436</div>
<div class="a l" style="left:556px;top:106px;color:#000">2019-10-14 00:00</div>
<div class="a l" style="left:681px;width:130px;text-align:center;top:106px;color:#000">2019-10-20 23:00</div>
<div class="a l" style="left:817px;top:106px;color:#000">0.16</div>
<div class="a l" style="left:927px;top:106px;color:#000">45630218</div>
<div style="position:absolute;left:0;top:146px;width:1036px;height:1px;background:#e8e8e8"></div>
<div class="a l" style="left:2px;top:127px;color:#000">7</div>
<div class="a" style="left:46px;width:305px;text-align:center;top:127px;color:#000">暖手宝充电宝两用小型暖宝宝试用</div>
<div class="a l" style="left:351px;width:65px;text-align:center;top:127px;color:#000">299</div>
<div class="a l" style="left:416px;width:60px;text-align:center;top:127px;color:#000">20</div>
<div class="a l" style="left:476px;width:75px;text-align:center;top:127px;color:#000">9761</div>
<div class="a l" style="left:556px;top:127px;color:#000">2019-10-14 00:00</div>
<div class="a l" style="left:681px;width:130px;text-align:center;top:127px;color:#000">2019-10-20 23:00</div>
<div class="a l" style="left:817px;top:127px;color:#000">2.05</div>
<div class="a l" style="left:927px;top:127px;color:#000">45702276</div>
<div style="position:absolute;left:0;top:167px;width:1036px;height:1px;background:#e8e8e8"></div>
<div class="a l" style="left:2px;top:148px;color:#000">8</div>
<div class="a" style="left:46px;width:305px;text-align:center;top:148px;color:#000">海信<span class="l">55</span>吋超音画<span class="l">AI</span>声控电视</div>
<div class="a l" style="left:351px;width:65px;text-align:center;top:148px;color:#000">5499</div>
<div class="a l" style="left:416px;width:60px;text-align:center;top:148px;color:#000">1</div>
<div class="a l" style="left:476px;width:75px;text-align:center;top:148px;color:#000">20642</div>
<div class="a l" style="left:556px;top:148px;color:#000">2019-10-14 00:00</div>
<div class="a l" style="left:681px;width:130px;text-align:center;top:148px;color:#000">2019-10-20 23:00</div>
<div class="a l" style="left:817px;top:148px;color:#000">0.05</div>
<div class="a l" style="left:927px;top:148px;color:#000">45888004</div>
<div style="position:absolute;left:0;top:188px;width:1036px;height:1px;background:#e8e8e8"></div>
<div class="a l" style="left:2px;top:169px;color:#000">9</div>
<div class="a" style="left:46px;width:305px;text-align:center;top:169px;color:#000">日本百年书包品牌 天使之翼</div>
<div class="a l" style="left:351px;width:65px;text-align:center;top:169px;color:#000">4998</div>
<div class="a l" style="left:416px;width:60px;text-align:center;top:169px;color:#000">1</div>
<div class="a l" style="left:476px;width:75px;text-align:center;top:169px;color:#000">9963</div>
<div class="a l" style="left:556px;top:169px;color:#000">2019-10-14 00:00</div>
<div class="a l" style="left:681px;width:130px;text-align:center;top:169px;color:#000">2019-10-20 23:00</div>
<div class="a l" style="left:817px;top:169px;color:#000">0.10</div>
<div class="a l" style="left:927px;top:169px;color:#000">45604276</div>
<div style="position:absolute;left:0;top:189px;width:1036px;height:20px;background:#3399ff"></div>
<div style="position:absolute;left:0;top:189px;width:1036px;height:0;border-top:1px dotted #d07020"></div>
<div style="position:absolute;left:0;top:189px;width:0;height:20px;border-left:1px dotted #d07020"></div>
<div style="position:absolute;left:46px;top:189px;width:1px;height:20px;background:#f2f2f2"></div>
<div style="position:absolute;left:351px;top:189px;width:1px;height:20px;background:#f2f2f2"></div>
<div style="position:absolute;left:416px;top:189px;width:1px;height:20px;background:#f2f2f2"></div>
<div style="position:absolute;left:476px;top:189px;width:1px;height:20px;background:#f2f2f2"></div>
<div style="position:absolute;left:551px;top:189px;width:1px;height:20px;background:#f2f2f2"></div>
<div style="position:absolute;left:681px;top:189px;width:1px;height:20px;background:#f2f2f2"></div>
<div style="position:absolute;left:811px;top:189px;width:1px;height:20px;background:#f2f2f2"></div>
<div style="position:absolute;left:921px;top:189px;width:1px;height:20px;background:#f2f2f2"></div>
<div style="position:absolute;left:0;top:209px;width:1036px;height:1px;background:#e8e8e8"></div>
<div class="a l" style="left:2px;top:190px;color:#fff">10</div>
<div class="a" style="left:46px;width:305px;text-align:center;top:190px;color:#fff">新会特产陈皮三宝茶，免费试喝</div>
<div class="a l" style="left:351px;width:65px;text-align:center;top:190px;color:#fff">236</div>
<div class="a l" style="left:416px;width:60px;text-align:center;top:190px;color:#fff">20</div>
<div class="a l" style="left:476px;width:75px;text-align:center;top:190px;color:#fff">2832</div>
<div class="a l" style="left:556px;top:190px;color:#fff">2019-10-14 00:00</div>
<div class="a l" style="left:681px;width:130px;text-align:center;top:190px;color:#fff">2019-10-20 23:00</div>
<div class="a l" style="left:817px;top:190px;color:#fff">7.06</div>
<div class="a l" style="left:927px;top:190px;color:#fff">45772142</div>
<div style="position:absolute;left:0;top:230px;width:1036px;height:1px;background:#e8e8e8"></div>
<div class="a l" style="left:2px;top:211px;color:#000">11</div>
<div class="a" style="left:46px;width:305px;text-align:center;top:211px;color:#000"><span class="l">DrJart/</span>蒂佳婷积雪草精华</div>
<div class="a l" style="left:351px;width:65px;text-align:center;top:211px;color:#000">298</div>
<div class="a l" style="left:416px;width:60px;text-align:center;top:211px;color:#000">15</div>
<div class="a l" style="left:476px;width:75px;text-align:center;top:211px;color:#000">9174</div>
<div class="a l" style="left:556px;top:211px;color:#000">2019-10-14 00:00</div>
<div class="a l" style="left:681px;width:130px;text-align:center;top:211px;color:#000">2019-10-20 23:00</div>
<div class="a l" style="left:817px;top:211px;color:#000">1.64</div>
<div class="a l" style="left:927px;top:211px;color:#000">46260007</div>
<div style="position:absolute;left:0;top:251px;width:1036px;height:1px;background:#e8e8e8"></div>
<div class="a l" style="left:2px;top:232px;color:#000">12</div>
<div class="a" style="left:46px;width:305px;text-align:center;top:232px;color:#000">勤丁卫浴挺起中国制造！</div>
<div class="a l" style="left:351px;width:65px;text-align:center;top:232px;color:#000">4160</div>
<div class="a l" style="left:416px;width:60px;text-align:center;top:232px;color:#000">1</div>
<div class="a l" style="left:476px;width:75px;text-align:center;top:232px;color:#000">4930</div>
<div class="a l" style="left:556px;top:232px;color:#000">2019-10-14 00:00</div>
<div class="a l" style="left:681px;width:130px;text-align:center;top:232px;color:#000">2019-10-20 23:00</div>
<div class="a l" style="left:817px;top:232px;color:#000">0.20</div>
<div class="a l" style="left:927px;top:232px;color:#000">45722202</div>
<div style="position:absolute;left:0;top:272px;width:1036px;height:1px;background:#e8e8e8"></div>
<div class="a l" style="left:2px;top:253px;color:#000">13</div>
<div class="a" style="left:46px;width:305px;text-align:center;top:253px;color:#000">小绿膜去黑头粉刺面膜</div>
<div class="a l" style="left:351px;width:65px;text-align:center;top:253px;color:#000">400</div>
<div class="a l" style="left:416px;width:60px;text-align:center;top:253px;color:#000">10</div>
<div class="a l" style="left:476px;width:75px;text-align:center;top:253px;color:#000">2184</div>
<div class="a l" style="left:556px;top:253px;color:#000">2019-10-14 00:00</div>
<div class="a l" style="left:681px;width:130px;text-align:center;top:253px;color:#000">2019-10-20 23:00</div>
<div class="a l" style="left:817px;top:253px;color:#000">4.58</div>
<div class="a l" style="left:927px;top:253px;color:#000">45640289</div>
<div style="position:absolute;left:0;top:293px;width:1036px;height:1px;background:#e8e8e8"></div>
<div class="a l" style="left:2px;top:274px;color:#000">14</div>
<div class="a" style="left:46px;width:305px;text-align:center;top:274px;color:#000">超值体验</div>
<div class="a l" style="left:351px;width:65px;text-align:center;top:274px;color:#000">360</div>
<div class="a l" style="left:416px;width:60px;text-align:center;top:274px;color:#000">10</div>
<div class="a l" style="left:476px;width:75px;text-align:center;top:274px;color:#000">1524</div>
<div class="a l" style="left:556px;top:274px;color:#000">2019-10-14 00:00</div>
<div class="a l" style="left:681px;width:130px;text-align:center;top:274px;color:#000">2019-10-20 23:00</div>
<div class="a l" style="left:817px;top:274px;color:#000">6.56</div>
<div class="a l" style="left:927px;top:274px;color:#000">45672260</div>
<div class="a l" style="left:2px;top:295px;color:#000">15</div>
<div class="a" style="left:46px;width:305px;text-align:center;top:295px;color:#000">高山乌龙茶新西兰国宝礼茶</div>
<div class="a l" style="left:351px;width:65px;text-align:center;top:295px;color:#000">1764</div>
<div class="a l" style="left:416px;width:60px;text-align:center;top:295px;color:#000">2</div>
<div class="a l" style="left:476px;width:75px;text-align:center;top:295px;color:#000">2449</div>
<div class="a l" style="left:556px;top:295px;color:#000">2019-10-14 00:00</div>
<div class="a l" style="left:681px;width:130px;text-align:center;top:295px;color:#000">2019-10-20 23:00</div>
<div class="a l" style="left:817px;top:295px;color:#000">0.83</div>
<div class="a l" style="left:927px;top:295px;color:#000">45666252</div>
</div>
<div style="position:absolute;left:1036px;top:238px;width:14px;height:327px;background:#f3f3f3"></div>
<div style="position:absolute;left:1036px;top:255px;width:14px;height:10px;background:#cdcdcd"></div>
<div style="position:absolute;left:0;top:565px;width:1036px;height:14px;background:#f3f3f3"></div>
<div style="position:absolute;left:13px;top:565px;width:905px;height:14px;background:#cdcdcd"></div>
<svg width="1066" height="611"><path d="M1039.5 249.0 L1043 244.0 L1046.5 249.0" fill="none" stroke="#707070" stroke-width="2.3"/><path d="M1039.5 553.0 L1043 558.0 L1046.5 553.0" fill="none" stroke="#707070" stroke-width="2.3"/><path d="M6.2 569.2 L2.4 572.5 L6.2 575.8" fill="none" stroke="#707070" stroke-width="2.3"/><path d="M1024.8 569.2 L1028.8 572.5 L1024.8 575.8" fill="none" stroke="#707070" stroke-width="2.3"/></svg>
<div class="hl" style="left:0;top:598px;width:1066px;background:#d6d6d6"></div>
<div class="vl" style="left:243px;top:600px;height:11px;background:#d6d6d6"></div>
<div class="vl" style="left:442px;top:600px;height:11px;background:#d6d6d6"></div>
<div class="vl" style="left:542px;top:600px;height:11px;background:#d6d6d6"></div>
<div class="vl" style="left:662px;top:600px;height:11px;background:#d6d6d6"></div>
<div class="vl" style="left:782px;top:600px;height:11px;background:#d6d6d6"></div>
<div class="a" style="left:-4px;top:601px">当前登录账号:未登录</div>
<div class="a" style="left:249px;top:601px">用户名:</div>
<div class="a" style="left:448px;top:601px">京豆:</div>
<div class="a" style="left:548px;top:601px">商铺关注:</div>
<div class="a" style="left:668px;top:601px">移动版:</div>
<div class="a" style="left:788px;top:601px">绑定邮箱:</div>
</body></html>
